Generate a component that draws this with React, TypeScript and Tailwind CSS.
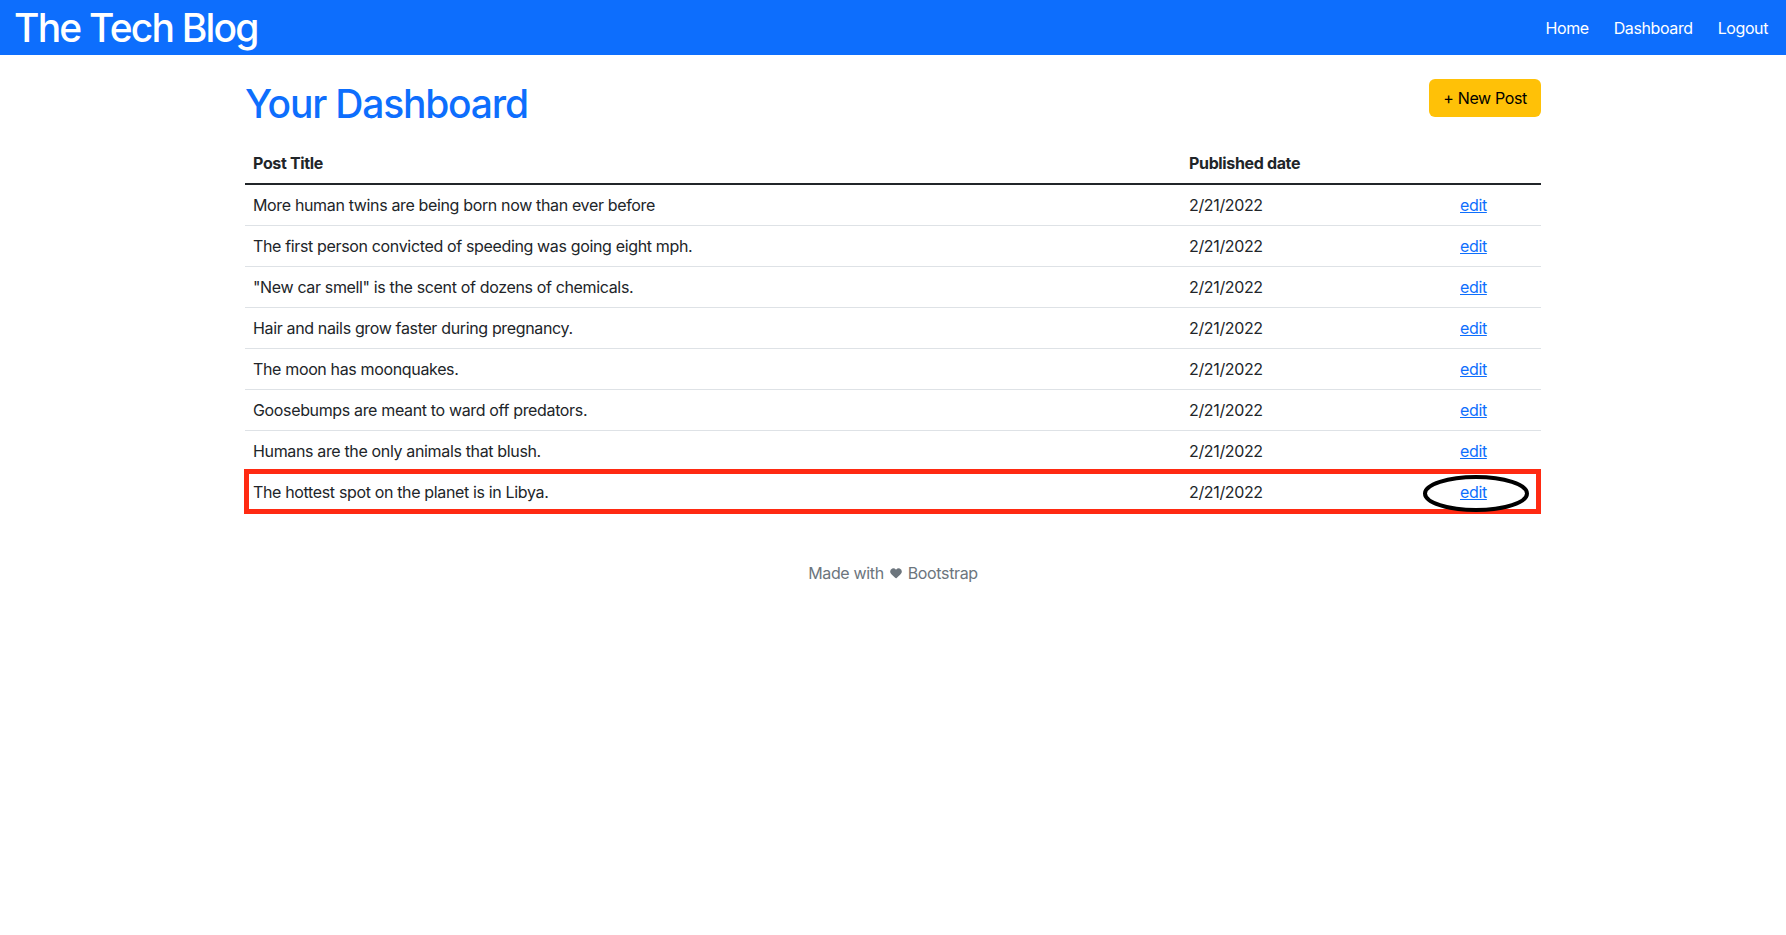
import { Heart } from 'lucide-react';

const posts = [
    'More human twins are being born now than ever before',
    'The first person convicted of speeding was going eight mph.',
    '"New car smell" is the scent of dozens of chemicals.',
    'Hair and nails grow faster during pregnancy.',
    'The moon has moonquakes.',
    'Goosebumps are meant to ward off predators.',
    'Humans are the only animals that blush.',
    'The hottest spot on the planet is in Libya.',
];

const font = { fontFamily: 'Inter, "Noto Sans", sans-serif' };

export default function App() {
    return (
        <div className="min-h-screen bg-white tracking-[-0.35px] text-[#212529]" style={font}>
            {/* navbar */}
            <nav className="flex h-[55px] items-center justify-between bg-[#0d6efd] pl-[14px] pr-[18px]">
                <a href="#" className="text-[39px] font-medium leading-none tracking-[-1.8px] text-white">
                    The Tech Blog
                </a>
                <div className="flex gap-[25px] text-[16px] tracking-[-0.4px] text-white">
                    <a href="#">Home</a>
                    <a href="#">Dashboard</a>
                    <a href="#">Logout</a>
                </div>
            </nav>

            <main className="mx-auto max-w-[1320px] px-3">
                <div className="mt-[25px] flex items-start justify-between">
                    <h1 className="text-[39px] font-medium leading-[48px] tracking-[-1.2px] text-[#0d6efd]">
                        Your Dashboard
                    </h1>
                    <button className="-mt-px h-[38px] rounded-md bg-[#ffc107] px-[14px] text-base text-black">
                        + New Post
                    </button>
                </div>

                <div className="mt-[14px] text-base">
                    <div className="grid grid-cols-[936px_271px_1fr] border-b-2 border-[#212529] font-bold">
                        <div className="px-2 pt-[9px] pb-2 leading-6">Post Title</div>
                        <div className="px-2 pt-[9px] pb-2 leading-6">Published date</div>
                        <div className="px-2 pt-[9px] pb-2 leading-6"></div>
                    </div>
                    {posts.map((title, i) => {
                        const last = i === posts.length - 1;
                        return (
                            <div
                                key={i}
                                className="relative grid grid-cols-[936px_271px_1fr] border-b border-[#dee2e6]"
                            >
                                <div className="px-2 py-2 leading-6">{title}</div>
                                <div className="px-2 py-2 leading-6">2/21/2022</div>
                                <div className="px-2 py-2 leading-6">
                                    <a href="#" className="text-[#0d6efd] underline">edit</a>
                                </div>
                                {last && (
                                    <>
                                        <div className="pointer-events-none absolute -top-[3px] -bottom-[2px] -left-px right-0 border-[5px] border-[#ff2a12]" />
                                        <svg
                                            className="pointer-events-none absolute left-[1178px] top-[3px]"
                                            width="106"
                                            height="37"
                                            viewBox="0 0 106 37"
                                        >
                                            <ellipse cx="53" cy="18.5" rx="51" ry="16.5" fill="none" stroke="#000" strokeWidth="4" />
                                        </svg>
                                    </>
                                )}
                            </div>
                        );
                    })}
                </div>
            </main>

            <footer className="mt-[48px] flex items-center justify-center gap-[5px] text-base text-[#6c757d]">
                <span>Made with</span>
                <Heart size={14} fill="#6c757d" strokeWidth={0} />
                <span>Bootstrap</span>
            </footer>
        </div>
    );
}
